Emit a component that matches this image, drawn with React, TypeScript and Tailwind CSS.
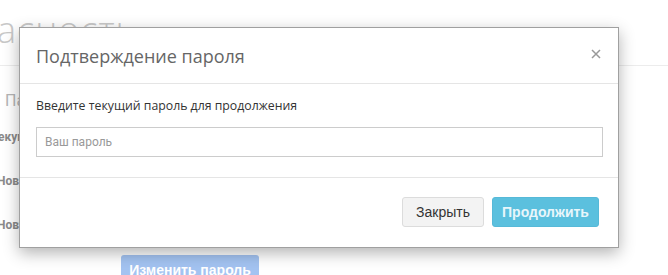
import React from 'react';

export default function App() {
    return (
        <div className="relative w-[668px] h-[275px] overflow-hidden bg-white font-['Roboto','Liberation_Sans',sans-serif]">
            {/* page behind the modal */}
            <div className="h-[66px] border-b border-[#ececec]">
                <div className="pt-[10px] -ml-[3px] text-[36px] leading-[40px] text-[#c8c8c8] font-light tracking-[1px] font-['Open_Sans',sans-serif]">асность</div>
            </div>
            <div className="pl-[5px] pt-[26px] text-[16px] leading-[18px] text-[#b5b5b5]">Па</div>
            <div className="pt-[18px] -ml-[2px] text-[12px] font-bold text-[#8a8a8a]">екущ</div>
            <div className="pt-[26px] -ml-[3px] text-[12px] font-bold text-[#8a8a8a]">Нов</div>
            <div className="pt-[26px] -ml-[3px] text-[12px] font-bold text-[#8a8a8a]">Новт</div>
            <div className="pl-[121px] pt-[21px]">
                <button className="w-[138px] h-[30px] rounded-[3px] bg-[#a3c3f1] text-white font-bold text-[14px] font-['Liberation_Sans',sans-serif]">
                    Изменить пароль
                </button>
            </div>

            {/* modal */}
            <div className="absolute left-[19px] top-[27px] w-[600px] h-[221px] bg-white border border-[#a0a0a0] shadow-[0_5px_15px_rgba(0,0,0,0.3)] flex flex-col">
                <div className="h-[56px] border-b border-[#e5e5e5] px-[16px] flex items-center justify-between">
                    <h4 className="text-[18px] text-[#666] mt-[2px] font-['Open_Sans',sans-serif]">Подтверждение пароля</h4>
                    <svg width="10" height="10" viewBox="0 0 10 10" className="mr-[1px] mb-[3px]">
                        <path d="M1 1 L9 9 M9 1 L1 9" stroke="#999" strokeWidth="1.5" />
                    </svg>
                </div>
                <div className="h-[94px] border-b border-[#e5e5e5] pl-[16px] pr-[15px] pt-[14px]">
                    <p className="text-[12.3px] text-[#333] leading-[16px] font-['Open_Sans',sans-serif]">Введите текущий пароль для продолжения</p>
                    <input
                        placeholder="Ваш пароль"
                        className="mt-[13px] w-full h-[30px] border border-[#ccc] px-[8px] text-[12px] placeholder:text-[#999] outline-none"
                    />
                </div>
                <div className="flex-1 flex justify-end items-start gap-[8px] pt-[19px] pr-[19px] font-['Liberation_Sans',sans-serif]">
                    <button className="w-[82px] h-[30px] rounded-[3px] bg-[#f3f3f3] border border-[#dcdcdc] text-[14px] text-[#333]">
                        Закрыть
                    </button>
                    <button className="w-[107px] h-[30px] rounded-[3px] bg-[#5bc0de] border border-[#56b9d8] text-[14px] font-bold text-[#e8f6fb]">
                        Продолжить
                    </button>
                </div>
            </div>
        </div>
    );
}
